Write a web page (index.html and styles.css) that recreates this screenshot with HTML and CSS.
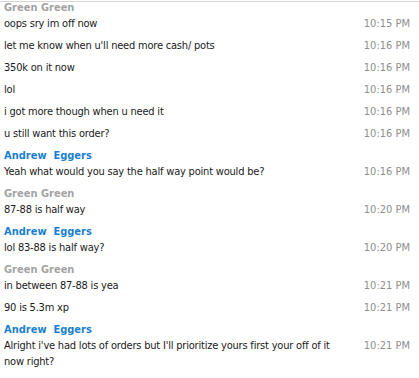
FILE: index.html
```html
<!DOCTYPE html>
<html>
<head>
<meta charset="utf-8">
<link rel="stylesheet" href="styles.css">
</head>
<body>
<div class="chat">
  <div class="list">
    <section class="group">
      <div class="name other">Green Green</div>
      <div class="msgs">
        <div class="msg"><p class="text">oops sry im off now</p><span class="time">10:15 PM</span></div>
        <div class="msg"><p class="text">let me know when u'll need more cash/ pots</p><span class="time">10:16 PM</span></div>
        <div class="msg"><p class="text">350k on it now</p><span class="time">10:16 PM</span></div>
        <div class="msg"><p class="text">lol</p><span class="time">10:16 PM</span></div>
        <div class="msg"><p class="text">i got more though when u need it</p><span class="time">10:16 PM</span></div>
        <div class="msg"><p class="text">u still want this order?</p><span class="time">10:16 PM</span></div>
      </div>
    </section>
    <section class="group">
      <div class="name me">Andrew  Eggers</div>
      <div class="msgs">
        <div class="msg"><p class="text">Yeah what would you say the half way point would be?</p><span class="time">10:16 PM</span></div>
      </div>
    </section>
    <section class="group">
      <div class="name other">Green Green</div>
      <div class="msgs">
        <div class="msg"><p class="text">87-88 is half way</p><span class="time">10:20 PM</span></div>
      </div>
    </section>
    <section class="group">
      <div class="name me">Andrew  Eggers</div>
      <div class="msgs">
        <div class="msg"><p class="text">lol 83-88 is half way?</p><span class="time">10:20 PM</span></div>
      </div>
    </section>
    <section class="group">
      <div class="name other">Green Green</div>
      <div class="msgs">
        <div class="msg"><p class="text">in between 87-88 is yea</p><span class="time">10:21 PM</span></div>
        <div class="msg"><p class="text">90 is 5.3m xp</p><span class="time">10:21 PM</span></div>
      </div>
    </section>
    <section class="group">
      <div class="name me">Andrew  Eggers</div>
      <div class="msgs">
        <div class="msg"><p class="text">Alright i've had lots of orders but I'll prioritize yours first your off of it now right?</p><span class="time">10:21 PM</span></div>
      </div>
    </section>
  </div>
</div>
</body>
</html>
```
FILE: styles.css
```css
html, body {
  margin: 0;
  background: #ffffff;
}
body {
  font-family: "DejaVu Sans Condensed", "DejaVu Sans", sans-serif;
  font-size: 11px;
  color: #1a1a1a;
  overflow: hidden;
}
.chat {
  margin-top: 1px;
  border-top: 1px solid #d6d6d6;
}
.list {
  margin-top: -2px;
  display: flex;
  flex-direction: column;
  gap: 6px;
}
.group {
  display: flex;
  flex-direction: column;
}
.name {
  line-height: 16px;
  font-weight: bold;
  padding-left: 4px;
  white-space: pre;
}
.name.other {
  color: #a3a3a3;
}
.name.me {
  color: #1a7fd0;
}
.msgs {
  display: flex;
  flex-direction: column;
  gap: 6px;
}
.msg {
  display: grid;
  grid-template-columns: 340px 1fr;
  padding-right: 9px;
}
.text {
  margin: 0;
  padding-left: 4px;
  line-height: 16px;
  letter-spacing: -0.2px;
}
.time {
  line-height: 16px;
  text-align: right;
  color: #8f8f8f;
}
```
